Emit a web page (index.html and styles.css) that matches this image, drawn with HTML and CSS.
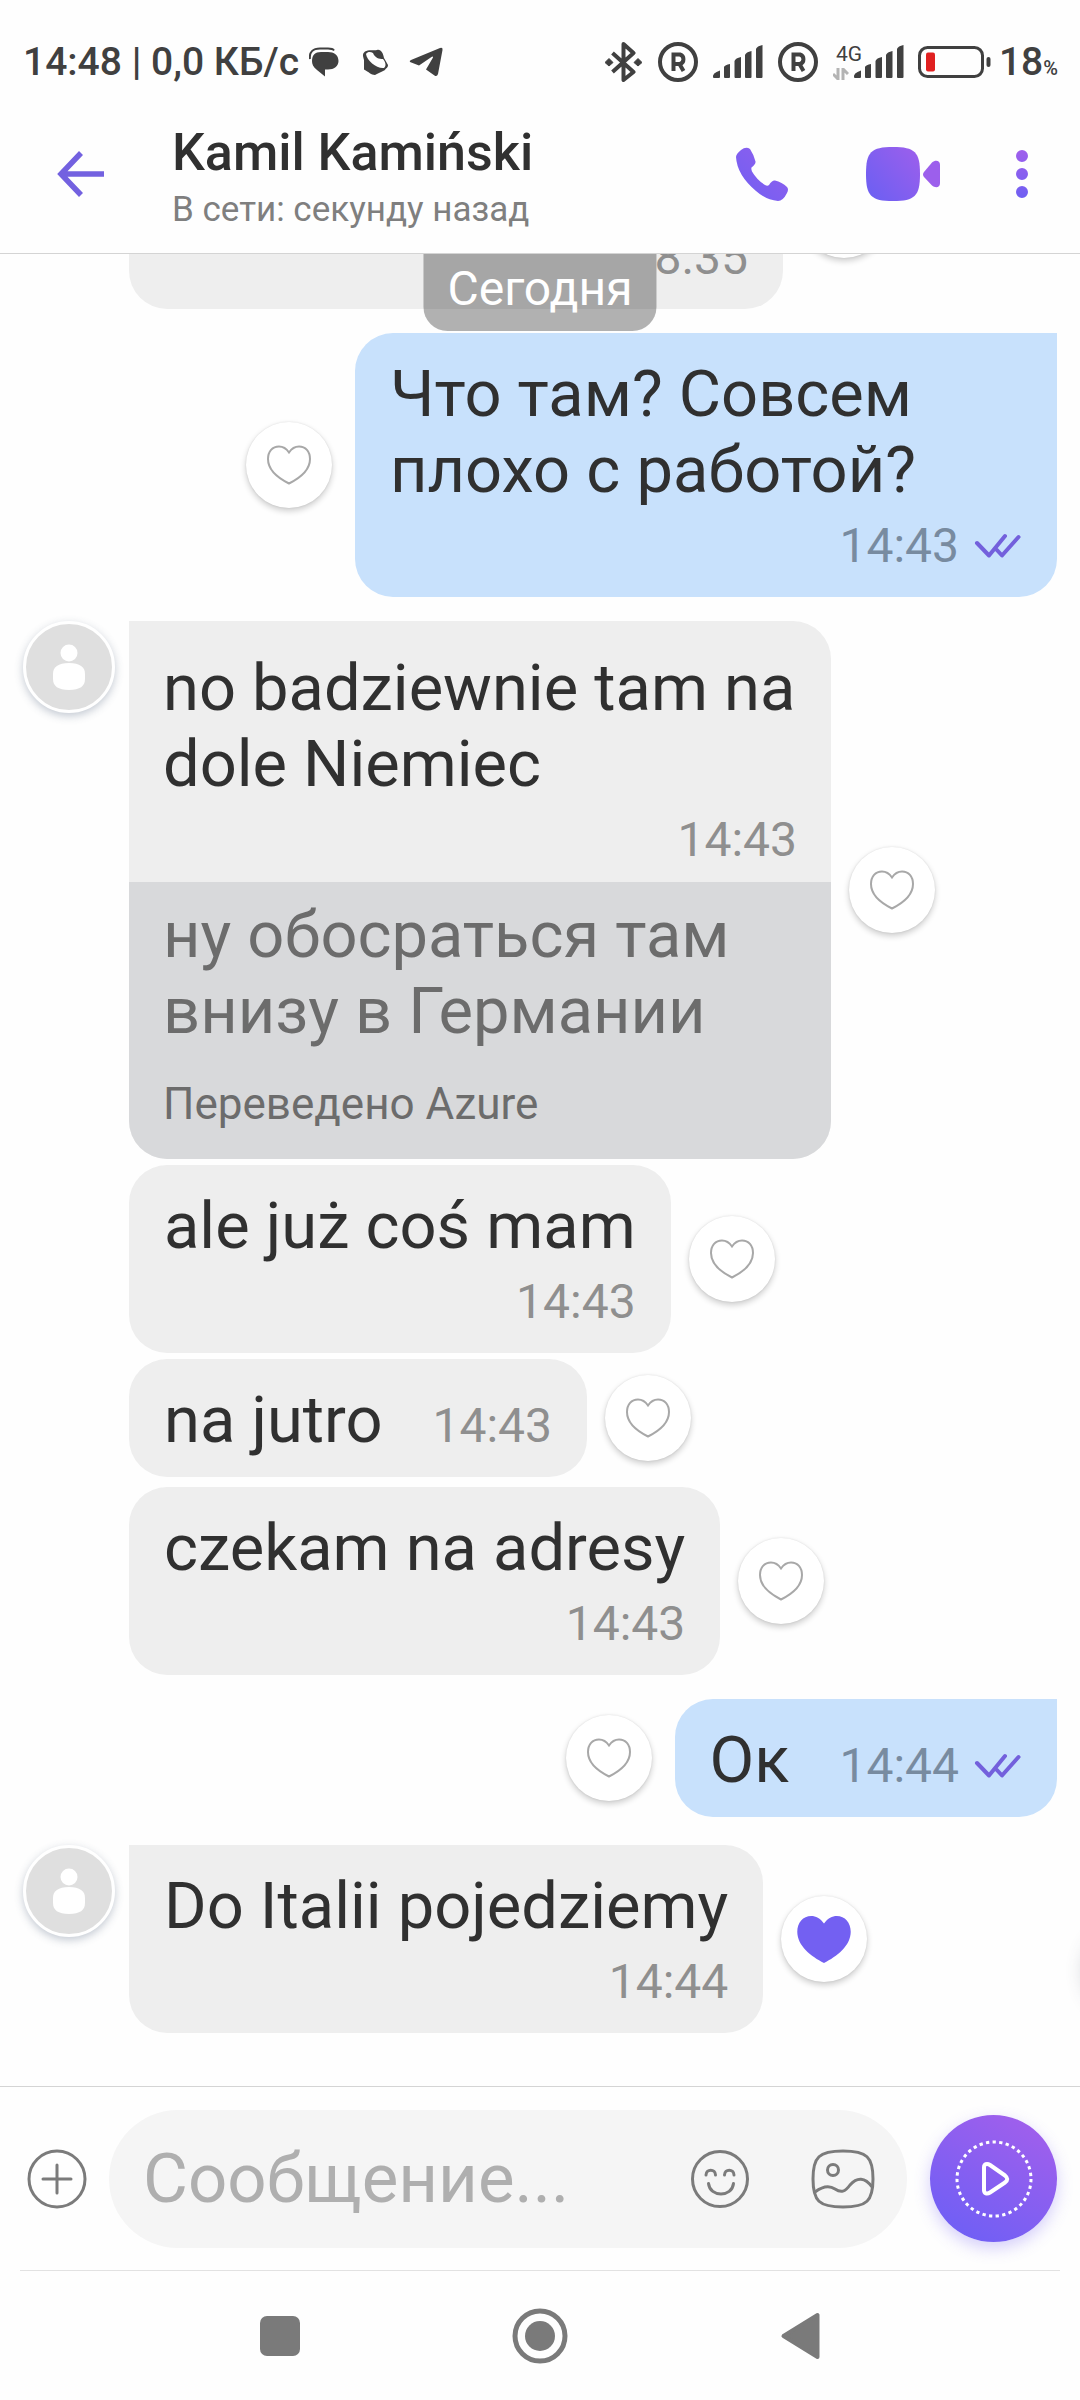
FILE: index.html
```
<!DOCTYPE html>
<html lang="ru">
<head>
<meta charset="utf-8">
<meta name="viewport" content="width=device-width, initial-scale=1">
<title>Kamil Kamiński</title>
<link rel="stylesheet" href="styles.css">
</head>
<body>
<svg class="defs" aria-hidden="true">
  <defs>
    <linearGradient id="violet-dots" gradientUnits="userSpaceOnUse" x1="6" y1="48" x2="6" y2="0">
      <stop offset="0" stop-color="#6f5ff2"/><stop offset="1" stop-color="#a05fec"/>
    </linearGradient>
    <linearGradient id="violet-call" gradientUnits="userSpaceOnUse" x1="0" y1="54" x2="70" y2="-16">
      <stop offset="0" stop-color="#6f5ff2"/><stop offset="1" stop-color="#a05fec"/>
    </linearGradient>
    <linearGradient id="violet-cam" gradientUnits="userSpaceOnUse" x1="6" y1="46" x2="56" y2="4">
      <stop offset="0" stop-color="#6f5ff2"/><stop offset="1" stop-color="#9c5fec"/>
    </linearGradient>
    <symbol id="heart" viewBox="0 0 44 40">
      <path d="M22 7.500C19 3 15.500 1.500 12 1.500C5.500 1.500 1 6.500 1 14C1 25 12 33.500 22 38.500C32 33.500 43 25 43 14C43 6.500 38.500 1.500 32 1.500C28.500 1.500 25 3 22 7.500Z"/>
    </symbol>
    <symbol id="ticks" viewBox="0 0 48 26">
      <path d="M3 10L15 22.500L31 3M22 16L28 22.500L44.500 4" fill="none" stroke="#7360dc" stroke-width="4" stroke-linecap="round" stroke-linejoin="round"/>
    </symbol>
    <symbol id="person" viewBox="0 0 86 86">
      <circle cx="43" cy="29" r="8.500" fill="#fff"/>
      <path d="M43 39C54 39 59 43 59 50V55C59 62 54 66 43 66C32 66 27 62 27 55V50C27 43 32 39 43 39Z" fill="#fff"/>
    </symbol>
    <symbol id="bars" viewBox="0 0 51 34">
      <path d="M1 32.500Q0 28 8 25.500V32Q8 33 7 33H2ZM12 22Q13 20 18 19V32Q18 33 17 33H13Q12 33 12 32ZM22.500 16Q23.500 13 29 12V32Q29 33 28 33H23.500Q22.500 33 22.500 32ZM33 10Q34 7 39.500 6V32Q39.500 33 38.500 33H34Q33 33 33 32ZM44 4Q45 1 50.500 0V32Q50.500 33 49.500 33H45Q44 33 44 32Z" fill="#404040"/>
    </symbol>
    <symbol id="roaming" viewBox="0 0 40 40">
      <circle cx="20" cy="20" r="18" fill="none" stroke="#404040" stroke-width="4"/>
      <path d="M15.500 29V12.500H22A5 5 0 0 1 22 22H15.500M21.500 22L25.500 29" fill="none" stroke="#404040" stroke-width="4"/>
    </symbol>
  </defs>
</svg>

<div class="status">
  <span class="status-text">14:48 | 0,0 КБ/с</span>
  <svg class="status-chat" width="30" height="30" viewBox="0 0 30 30"><path d="M1 12C0 5 4 1.500 11 1.500H19C22 1.500 24 2 25 3.500" fill="none" stroke="#404040" stroke-width="2"/><path d="M12 5H19C25 5 29.500 8 29.500 14C29.500 19 25 22.500 19 22.500H16V29.500L8 23C4 20 3 17 3 14C3 8 6 5 12 5Z" fill="#404040"/></svg>
  <svg class="status-swirl" width="27" height="27" viewBox="0 0 27 27"><path d="M3 2.500C7 0 12 2 15 1C19 0 21 4 22 9L26 16C26 19 24 19 23 21C20 23 16 24 13 26C9 26 7 23 2 20.500L2 11C1 7 0 5 3 2.500Z" fill="#404040"/><path d="M4 5C6 2 9 3 11 4C13 9 17 10 21 10C23 12 25 17 22 19C15 20 5 12 4 5Z" fill="#fff"/></svg>
  <svg class="status-plane" width="34" height="30" viewBox="0 0 34 30"><path d="M1 15Q0 14 2 13L31 1Q34 0 33.500 3L29 27Q28 30 25.500 28.500L17 22.500L24 10.500Q24 9 22.500 10L10 18.500Z" fill="#404040"/></svg>
  <div class="status-right">
    <svg class="bt" width="37" height="40" viewBox="0 0 37 40"><path d="M7.500 11L28.500 30L18.500 38V2L28.500 11L7.500 30" fill="none" stroke="#404040" stroke-width="4" stroke-linejoin="round"/><path d="M4 16.500L8 20.500L4 24L0 20.500ZM33 16.500L37 20.500L33 24L29 20.500Z" fill="#404040" stroke="#404040" stroke-linejoin="round"/></svg>
    <svg class="roam" width="40" height="40"><use href="#roaming"/></svg>
    <svg class="signal" width="51" height="34"><use href="#bars"/></svg>
    <svg class="roam" width="40" height="40"><use href="#roaming"/></svg>
    <span class="net"><span>4G</span><svg width="16" height="12" viewBox="0 0 16 12"><path d="M5 0V11L0 6M10 12V1L15 6" fill="none" stroke="#b4b4b4" stroke-width="3"/></svg></span>
    <svg class="signal-2" width="51" height="34"><use href="#bars"/></svg>
    <svg class="battery" width="73" height="32" viewBox="0 0 73 32"><rect x="1.500" y="1.500" width="63" height="29" rx="8" fill="none" stroke="#404040" stroke-width="3"/><rect x="8" y="6.500" width="9" height="19" rx="2" fill="#e02020"/><rect x="68.500" y="11" width="4" height="10" rx="2" fill="#404040"/></svg>
    <span class="status-text">18<small>%</small></span>
  </div>
</div>

<header class="header">
  <button class="icon-btn" aria-label="Назад"><svg width="48" height="48" viewBox="0 0 48 48"><path d="M25 3L5 24L25 45M5 24H48" fill="none" stroke="#7361e0" stroke-width="5.500"/></svg></button>
  <div class="peer">
    <h1>Kamil Kamiński</h1>
    <p>В сети: секунду назад</p>
  </div>
  <nav class="actions">
    <button class="icon-btn" aria-label="Позвонить"><svg width="52" height="54" viewBox="0 0 52 54"><path d="M5 3Q10 -1 14 2Q18 8 19.500 14.500Q20 17 15.500 20.500Q15 22 16 24.500Q21 33 29 38Q31.500 39.500 33 38Q36 33 39 33.500Q46 35 51 40Q53 42 51 46Q47 54 42 54Q30 53 20 44Q1 28 0 10Q0 7 5 3Z" fill="url(#violet-call)"/></svg></button>
    <button class="icon-btn" aria-label="Видеозвонок"><svg width="76" height="54" viewBox="0 0 76 54"><path d="M29 0C51 0 56 5 56 27C56 49 51 54 29 54C7 54 2 49 2 27C2 5 7 0 29 0Z" fill="url(#violet-cam)"/><path d="M60 25L68 15.500C71 13 76 13 76 18V36C76 41 71 41 68 38.500L60 30Q58 27.500 60 25Z" fill="#9c5fec"/></svg></button>
    <button class="icon-btn" aria-label="Меню"><svg width="12" height="48" viewBox="0 0 12 48"><path d="M0 6a6 6 0 1 0 12 0a6 6 0 1 0-12 0M0 24a6 6 0 1 0 12 0a6 6 0 1 0-12 0M0 42a6 6 0 1 0 12 0a6 6 0 1 0-12 0" fill="url(#violet-dots)"/></svg></button>
  </nav>
</header>

<main class="chat">
  <div class="date">Сегодня</div>

  <div class="row in">
    <div class="slot"></div>
    <div class="bubble earlier"><div class="meta"><time>8.35</time></div></div>
    <button class="like" aria-label="Нравится"><svg width="44" height="40"><use href="#heart"/></svg></button>
  </div>

  <div class="row out turn">
    <button class="like" aria-label="Нравится"><svg width="44" height="40"><use href="#heart"/></svg></button>
    <div class="bubble first">
      <p>Что там? Совсем плохо с работой?</p>
      <div class="meta"><time>14:43</time><svg width="48" height="26"><use href="#ticks"/></svg></div>
    </div>
  </div>

  <div class="row in turn">
    <div class="slot"><div class="avatar"><svg width="86" height="86"><use href="#person"/></svg></div></div>
    <div class="bubble first translated">
      <div class="original">
        <p>no badziewnie tam na dole Niemiec</p>
        <div class="meta"><time>14:43</time></div>
      </div>
      <div class="translation">
        <p>ну обосраться там внизу в Германии</p>
        <small>Переведено Azure</small>
      </div>
    </div>
    <button class="like" aria-label="Нравится"><svg width="44" height="40"><use href="#heart"/></svg></button>
  </div>

  <div class="row in">
    <div class="slot"></div>
    <div class="bubble"><p>ale już coś mam</p><div class="meta"><time>14:43</time></div></div>
    <button class="like" aria-label="Нравится"><svg width="44" height="40"><use href="#heart"/></svg></button>
  </div>

  <div class="row in">
    <div class="slot"></div>
    <div class="bubble short"><p>na jutro</p><div class="meta"><time>14:43</time></div></div>
    <button class="like" aria-label="Нравится"><svg width="44" height="40"><use href="#heart"/></svg></button>
  </div>

  <div class="row in spaced">
    <div class="slot"></div>
    <div class="bubble"><p>czekam na adresy</p><div class="meta"><time>14:43</time></div></div>
    <button class="like" aria-label="Нравится"><svg width="44" height="40"><use href="#heart"/></svg></button>
  </div>

  <div class="row out turn">
    <button class="like" aria-label="Нравится"><svg width="44" height="40"><use href="#heart"/></svg></button>
    <div class="bubble first short"><p>Ок</p><div class="meta"><time>14:44</time><svg width="48" height="26"><use href="#ticks"/></svg></div></div>
  </div>

  <div class="row in reply">
    <div class="slot"><div class="avatar"><svg width="86" height="86"><use href="#person"/></svg></div></div>
    <div class="bubble first"><p>Do Italii pojedziemy</p><div class="meta"><time>14:44</time></div></div>
    <button class="like liked" aria-label="Нравится" aria-pressed="true"><svg width="56" height="51"><use href="#heart"/></svg></button>
  </div>

  <div class="jump"></div>
</main>

<form class="composer">
  <button type="button" class="icon-btn" aria-label="Добавить"><svg width="60" height="60" viewBox="0 0 60 60"><g fill="none" stroke="#7b7b7b" stroke-width="3" stroke-linecap="round"><circle cx="30" cy="30" r="28"/><path d="M30 16V44M16 30H44"/></g></svg></button>
  <div class="field">
    <input type="text" placeholder="Сообщение..." aria-label="Сообщение">
    <button type="button" class="icon-btn" aria-label="Эмодзи"><svg width="58" height="60" viewBox="0 0 58 60"><g fill="none" stroke="#7b7b7b" stroke-width="3" stroke-linecap="round"><circle cx="29" cy="30" r="27.500"/><path d="M15 26C15 19.500 24.500 19.500 24.500 26M33.500 26C33.500 19.500 43 19.500 43 26M17.500 34.500C19 48.500 41 48.500 42.500 34.500"/></g></svg></button>
    <button type="button" class="icon-btn" aria-label="Галерея"><svg width="64" height="60" viewBox="0 0 64 60"><g fill="none" stroke="#7b7b7b" stroke-width="3"><path d="M32 2C56 2 62 8 62 30C62 52 56 58 32 58C8 58 2 52 2 30C2 8 8 2 32 2Z"/><circle cx="22" cy="21" r="5.500"/><path d="M4 43C12 37 18 36 24 40C30 44 34 43 39 36C46 28 54 28 61 38"/></g></svg></button>
  </div>
  <button type="button" class="record" aria-label="Видеосообщение"><svg width="80" height="80" viewBox="0 0 80 80"><g fill="none" stroke="#fff"><circle cx="40" cy="40" r="37" stroke-width="3" stroke-dasharray="3.300 3.340"/><path d="M30 28.500C30 25 33 24 36 26L51 36.500C54 39 54 41 51 43.500L36 53.500C33 55.500 30 54.500 30 51Z" stroke-width="4" stroke-linejoin="round"/></g></svg></button>
</form>

<nav class="system">
  <button class="icon-btn" aria-label="Недавние"><svg width="56" height="56" viewBox="0 0 56 56"><rect x="8" y="8" width="40" height="40" rx="7" fill="#7a7a7a"/></svg></button>
  <button class="icon-btn" aria-label="Домой"><svg width="56" height="56" viewBox="0 0 56 56"><circle cx="28" cy="28" r="25" fill="none" stroke="#7a7a7a" stroke-width="5"/><circle cx="28" cy="28" r="15" fill="#7a7a7a"/></svg></button>
  <button class="icon-btn" aria-label="Назад"><svg width="56" height="56" viewBox="0 0 56 56"><path d="M11.500 28L45.500 7V49Z" fill="#7a7a7a" stroke="#7a7a7a" stroke-width="4" stroke-linejoin="round"/></svg></button>
</nav>
</body>
</html>
```
FILE: styles.css
```
* {
  box-sizing: border-box;
  margin: 0;
}

body {
  display: flex;
  flex-direction: column;
  height: 100vh;
  background: #fefefe;
  color: #303030;
  font-family: Roboto, "Noto Sans", sans-serif;
}

svg {
  display: block;
  flex: none;
}

.defs {
  position: absolute;
  width: 0;
  height: 0;
}

button {
  flex: none;
  padding: 0;
  border: 0;
  background: none;
  font: inherit;
}

/* Status bar */
.status {
  display: flex;
  align-items: center;
  height: 94px;
  padding: 30px 22px 0 23px;
  color: #404040;
}

.status-text {
  font-size: 39px;
  font-weight: 500;
  line-height: 46px;
  white-space: nowrap;
}

.status-text small {
  font-size: 20px;
  line-height: 20px;
}

.status-chat { margin-left: 10px; }
.status-swirl { margin-left: 23px; }
.status-plane { margin-left: 20px; }

.status-right {
  display: flex;
  align-items: center;
  margin-left: auto;
}

.roam { margin-left: 15px; }
.signal { margin-left: 14px; }
.bt { margin-right: 1px; }
.signal-2 { margin-left: 4px; }
.battery { margin: 0 8px 0 14px; }

.net {
  display: flex;
  flex-direction: column;
  gap: 5px;
  width: 16px;
  margin-left: 15px;
  font-size: 21px;
  line-height: 18px;
}

.net span {
  padding-left: 3px;
}

/* Conversation header */
.header {
  display: flex;
  align-items: center;
  height: 160px;
  padding: 0 52px 0 56px;
  border-bottom: 1px solid #d4d4d4;
}

.peer {
  flex: 1;
  min-width: 0;
  padding: 4px 0 0 68px;
}

.peer h1 {
  font-size: 52px;
  font-weight: 500;
  line-height: 61px;
}

.peer p {
  margin-top: 7px;
  color: #7f7f7f;
  font-size: 35px;
  line-height: 40px;
}

.actions {
  display: flex;
  align-items: center;
  gap: 76px;
}

/* Messages stay pinned to the bottom; older ones slide under the header */
.chat {
  position: relative;
  display: flex;
  flex: 1;
  flex-direction: column;
  justify-content: flex-end;
  gap: 6px;
  min-height: 0;
  padding-bottom: 53px;
  overflow: hidden;
}

.date {
  position: absolute;
  top: 0;
  left: 50%;
  z-index: 1;
  height: 77px;
  padding: 7px 24px 0;
  border-radius: 0 0 24px 24px;
  background: rgba(0, 0, 0, 0.3);
  color: #fff;
  font-size: 48px;
  line-height: 56px;
  transform: translateX(-50%);
}

.row {
  display: flex;
  flex: none;
  align-items: center;
}

.row.in {
  gap: 18px;
  padding-left: 23px;
}

.row.out {
  justify-content: flex-end;
  gap: 23px;
  padding-right: 23px;
}

.row.spaced { margin-top: 4px; }
.row.turn { margin-top: 18px; }
.row.reply { margin-top: 22px; }

.slot {
  flex: none;
  align-self: flex-start;
  width: 88px;
}

.avatar {
  width: 92px;
  height: 92px;
  border: 3px solid #fff;
  border-radius: 50%;
  background: #dfdfdf;
  box-shadow: 0 3px 8px rgba(60, 80, 110, 0.3);
}

.bubble {
  max-width: 65vw;
  padding: 23px 35px;
  border-radius: 38px;
  background: #eeeeee;
  font-size: 65px;
  line-height: 76px;
}

.in .first { border-top-left-radius: 0; }

.out .bubble { background: #c8e1fc; }
.out .first { border-top-right-radius: 0; }

.meta {
  display: flex;
  align-items: center;
  justify-content: flex-end;
  gap: 15px;
  margin-top: 10px;
  color: #8f8f8f;
  font-size: 48px;
  line-height: 56px;
}

.out .meta { color: #788ba0; }

.short {
  display: flex;
  align-items: baseline;
  gap: 50px;
  padding-bottom: 19px;
}

.short .meta { margin-top: 0; }

.earlier {
  display: flex;
  align-items: flex-end;
  justify-content: flex-end;
  width: 654px;
  height: 188px;
}

.translated {
  padding: 0;
  overflow: hidden;
}

.original { padding: 29px 34px 14px; }

.translation {
  padding: 15px 34px 29px;
  background: #d8d9db;
  color: #6c6c6c;
}

.translation small {
  display: block;
  margin-top: 29px;
  font-size: 44px;
  line-height: 52px;
}

.like {
  display: flex;
  align-items: center;
  justify-content: center;
  width: 86px;
  height: 86px;
  border-radius: 50%;
  background: #fff;
  box-shadow: 0 3px 6px rgba(0, 0, 0, 0.2), 0 0 2px rgba(0, 0, 0, 0.1);
}

.like svg {
  fill: none;
  stroke: #a8a8a8;
  stroke-width: 2px;
}

.liked svg {
  fill: #7360f2;
  stroke: none;
}

/* Scroll button parked beyond the right edge, only its shadow shows */
.jump {
  position: absolute;
  right: -92px;
  bottom: 72px;
  width: 86px;
  height: 86px;
  border-radius: 50%;
  box-shadow: 0 0 20px rgba(60, 70, 90, 0.3);
}

/* Composer */
.composer {
  display: flex;
  align-items: center;
  height: 184px;
  padding: 0 23px 0 27px;
  border-top: 1px solid #d4d4d4;
}

.field {
  display: flex;
  flex: 1;
  align-items: center;
  height: 138px;
  min-width: 0;
  margin: 0 23px 0 22px;
  padding: 0 32px 0 34px;
  border-radius: 69px;
  background: #f5f5f5;
}

.field input {
  flex: 1;
  min-width: 0;
  padding: 0;
  border: 0;
  outline: 0;
  background: none;
  color: #303030;
  font: 69px/82px Roboto, "Noto Sans", sans-serif;
}

.field input::placeholder {
  color: #afafaf;
  opacity: 1;
}

.field .icon-btn + .icon-btn { margin-left: 62px; }

.record {
  display: flex;
  align-items: center;
  justify-content: center;
  width: 127px;
  height: 127px;
  border-radius: 50%;
  background: linear-gradient(30deg, #6f5ff5 10%, #a05fec 90%);
  box-shadow: 0 6px 16px rgba(115, 96, 242, 0.3);
}

/* System navigation */
.system {
  display: flex;
  align-items: center;
  justify-content: center;
  gap: 204px;
  height: 130px;
  margin: 0 20px;
  border-top: 1px solid #e2e2e2;
}
```
